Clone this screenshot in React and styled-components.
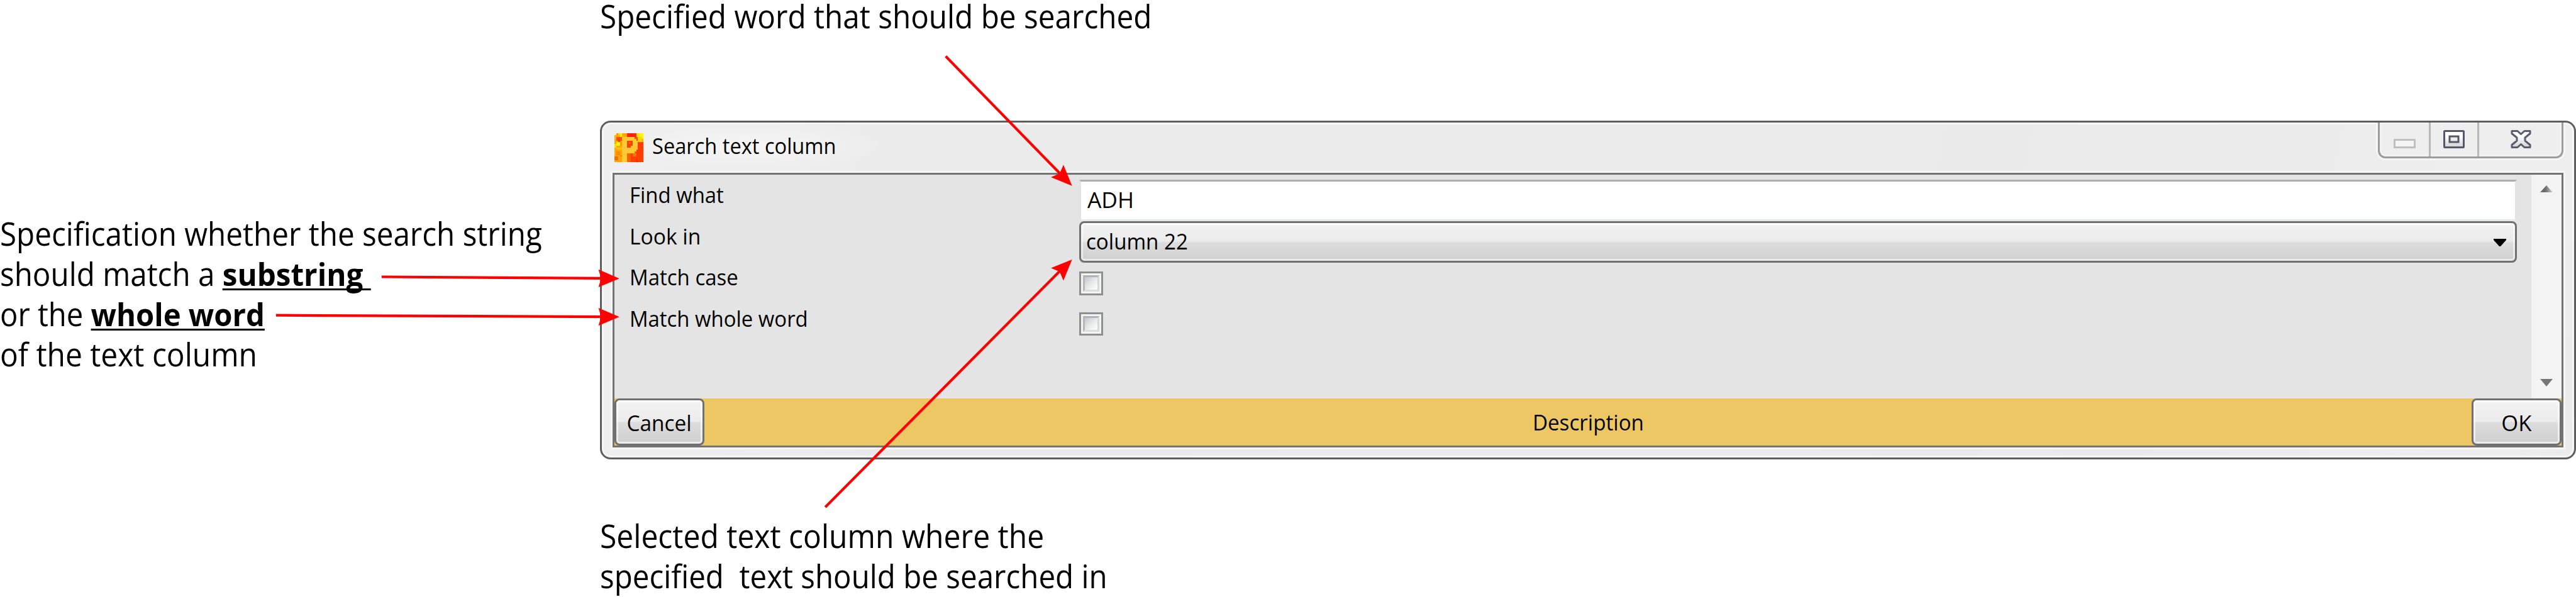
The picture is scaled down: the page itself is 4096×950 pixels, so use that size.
import React from 'react';
import styled, { createGlobalStyle } from 'styled-components';

const Global = createGlobalStyle`
  html, body { margin: 0; background: #fff; overflow: hidden; }
  * { box-sizing: border-box; }
`;

const Page = styled.main`
  position: relative;
  display: grid;
  grid-template-columns: 954px 3142px;
  width: 4096px;
  height: 950px;
  overflow: hidden;
  background: #fff;
  font-family: "Open Sans", "Noto Sans", sans-serif;
  color: #000;
`;

const SideNotes = styled.aside`
  padding-top: 339.6px;
`;

const Stage = styled.section`
  display: flex;
  flex-direction: column;
`;

const TopNote = styled.div`
  height: 192px;
`;

const BottomNote = styled.div`
  padding-top: 89.6px;
`;

const NoteLine = styled.div`
  height: ${(p) => p.$line || 63.97}px;
  line-height: ${(p) => p.$line || 63.97}px;
  font-size: 50.3px;
  white-space: pre;
  transform: scaleX(${(p) => p.$fit});
  transform-origin: left center;
`;

const Strong = styled.strong`
  font-weight: 700;
  text-decoration: underline;
  text-decoration-thickness: 3px;
  text-underline-offset: 4px;
  text-decoration-skip-ink: none;
`;

const Window = styled.section`
  width: 3142px;
  height: 539px;
  padding: 0 17px;
  border: 3px solid #5e5e5e;
  border-radius: 17px;
  box-shadow: inset 0 0 0 3px #f6f6f6;
  background: linear-gradient(100deg, #efefef 0, #eeeeee 260px, #ebebeb 520px, #eaeaea 70%, #eeeeee 97%, #ebebeb 100%);
`;

const TitleBar = styled.header`
  display: flex;
  align-items: flex-start;
  justify-content: space-between;
  height: 80px;
`;

const TitleGroup = styled.div`
  display: flex;
  align-items: flex-start;
  padding: 17px 60px 0 3px;
  height: 74px;
  background: radial-gradient(closest-side, rgba(255, 255, 255, 0.45), rgba(255, 255, 255, 0));
`;

const AppIcon = styled.svg`
  width: 46px;
  height: 46px;
  margin-right: 14px;
`;

const UiText = styled.span`
  display: inline-block;
  font-size: 35px;
  line-height: ${(p) => p.$line || 48}px;
  white-space: nowrap;
  transform: scaleX(${(p) => p.$fit});
  transform-origin: ${(p) => p.$origin || 'left'} center;
`;

const Controls = styled.div`
  display: flex;
  height: 57px;
  border: 3px solid #9c9c9c;
  border-top: 0;
  border-radius: 0 0 12px 12px;
  width: 295px;
  background: #eeeeee;
  box-shadow: 0 0 0 3px #f5f5f5, inset 0 0 0 3px #f2f2f2;
  clip-path: inset(0 -4px -4px -4px);
`;

const ControlButton = styled.div`
  width: ${(p) => p.$width}px;
  height: 54px;
  border-right: ${(p) => (p.$last ? 0 : 3)}px solid #b8b8b8;
  padding-top: 12px;
  padding-left: ${(p) => p.$pad}px;
`;

const Glyph = styled.svg`
  display: block;
`;

const Client = styled.div`
  width: 3102px;
  height: 437px;
  border: 3px solid #737373;
  box-shadow: 0 0 0 3px #f6f6f6;
  background: #e4e4e4;
`;

const Body = styled.div`
  display: flex;
  height: 356px;
`;

const Form = styled.div`
  flex: 1;
  padding: 8px 23px 0 24px;
`;

const Row = styled.div`
  display: grid;
  grid-template-columns: 715.3px 1fr;
  align-items: start;
  height: 65.65px;
`;

const TextField = styled.div`
  height: 65.65px;
  padding-left: 10px;
  border: 3px solid;
  border-color: #abadb3 #e2e3ea #e3e9ef #e2e3ea;
  background: #fff;
`;

const Combo = styled.div`
  display: flex;
  justify-content: space-between;
  height: 66px;
  padding: 0 14.5px 0 7.5px;
  border: 3px solid #707070;
  border-radius: 8px;
  background: linear-gradient(#f2f2f2 0, #ebebeb 48%, #dddddd 52%, #cfcfcf 100%);
  box-shadow: inset 0 0 0 3px rgba(255, 255, 255, 0.55), inset 0 3px 0 #fff;
`;

const ComboArrow = styled.svg`
  width: 20px;
  height: 12px;
  margin-top: 25px;
`;

const CheckBox = styled.div`
  width: 37.5px;
  height: 37.5px;
  margin-top: ${(p) => p.$top}px;
  padding: 3px;
  border: 3px solid #8e8f8f;
  background: #f4f4f4;
`;

const CheckWell = styled.div`
  height: 100%;
  border: 3px solid;
  border-color: #aeb3b9 #d5d7d9 #dcdddd #b5b9be;
  background: linear-gradient(135deg, #c3c8d0 0, #e6e8ea 50%, #f7f7f7 80%);
`;

const ScrollBar = styled.div`
  display: flex;
  flex-direction: column;
  justify-content: space-between;
  align-items: center;
  width: 48px;
  padding: 17px 0 19px;
  background: #f3f3f3;
`;

const Footer = styled.footer`
  display: flex;
  align-items: center;
  justify-content: space-between;
  height: 75px;
  background: #edc763;
`;

const Button = styled.div`
  width: 142.5px;
  height: 75px;
  text-align: center;
  border: 3px solid #707070;
  border-radius: 8px;
  background: linear-gradient(#f3f3f3 0, #ebebeb 49%, #dddddd 51%, #cecece 100%);
  box-shadow: inset 0 0 0 3px rgba(255, 255, 255, 0.6), inset 0 3px 0 #fff;
`;

const Arrows = styled.svg`
  position: absolute;
  left: 0;
  top: 0;
  width: 4096px;
  height: 949.5px;
  pointer-events: none;
`;

const ARROWS = [
  { line: [1645.4, 98, 1846, 304], head: '1865.3,323.7 1850.3,287 1843.7,302 1828.5,308.7' },
  { line: [1435.9, 883, 1846, 470], head: '1865.3,452 1828.5,466.8 1843.5,473 1850.3,488.7' },
  { line: [664, 482, 1050, 484.7], head: '1077.7,484.9 1041.2,469.3 1046,484.7 1041.2,500' },
  { line: [480.2, 549, 1050, 551.6], head: '1077.7,551.8 1041.2,536.3 1046,551.7 1041.2,567' },
];

const SPECKS = [
  [0, 0, 1, 1, '#fff59a'], [1, 0, 1, 1, '#ff9a00'], [2, 0, 2, 1, '#ffd800'], [3, 0, 1, 2, '#fff200'],
  [7, 0, 5, 2, '#ff2400'], [12, 0, 4, 2, '#ffdc00'], [14, 0, 2, 3, '#fff600'], [13, 2, 2, 3, '#ffd000'],
  [15, 3, 1, 2, '#ffb400'], [0, 1, 1, 2, '#ffb000'], [1, 2, 3, 2, '#ff5000'], [2, 3, 1, 2, '#ff3c00'],
  [1, 5, 2, 2, '#fff000'], [0, 6, 1, 2, '#ffdc00'], [3, 5, 1, 2, '#ff9000'], [1, 8, 3, 1, '#ffc400'],
  [1, 10, 2, 2, '#ff8800'], [3, 12, 1, 1, '#ff7000'], [0, 13, 2, 2, '#ff6a00'], [2, 15, 2, 1, '#ffa000'],
  [9, 10, 3, 1, '#ff5a00'], [10, 11, 2, 2, '#ff7400'], [8, 12, 1, 2, '#ff5800'], [12, 15, 1, 1, '#ff2000'],
];

function Icon() {
  return (
    <AppIcon viewBox="0 0 16 16" shapeRendering="crispEdges">
      <rect width="16" height="16" fill="#ff3e00" />
      <rect width="8" height="16" fill="#ffa800" />
      <rect x="7" y="10" width="2" height="6" fill="#ff6000" />
      <rect x="8" y="1" width="5" height="2" fill="#ff5000" />
      {SPECKS.map(([x, y, w, h, c], i) => (
        <rect key={i} x={x} y={y} width={w} height={h} fill={c} />
      ))}
      <path
        fill="#ffc933" fillRule="evenodd"
        d="M4 2h7v1h1v1h1v5h-1v1h-1v1H7v5H4zM7 4v4h2V7h1V4z"
      />
      <path fill="#ff3e00" d="M7 4h3v3H9v1H7z" />
      <path fill="#ff7000" d="M8 5h1v1H8z" />
    </AppIcon>
  );
}

export default function App() {
  return (
    <Page>
      <Global />
      <SideNotes>
        <NoteLine $fit={0.9464}>Specification whether the search string</NoteLine>
        <NoteLine $fit={0.946}>should match a <Strong>substring </Strong></NoteLine>
        <NoteLine $fit={0.939}>or the <Strong>whole word</Strong></NoteLine>
        <NoteLine $fit={0.953}>of the text column</NoteLine>
      </SideNotes>
      <Stage>
        <TopNote>
          <NoteLine $line={51} $fit={0.948}>Specified word that should be searched</NoteLine>
        </TopNote>
        <Window>
          <TitleBar>
            <TitleGroup>
              <Icon />
              <UiText $fit={0.932} $line={40}>Search text column</UiText>
            </TitleGroup>
            <Controls>
              <ControlButton $width={81} $pad={22}>
                <Glyph width="35" height="29" viewBox="0 0 35 29">
                  <rect x="1.5" y="15.5" width="32" height="12" fill="#f5f5f5" stroke="#bfbfbf" strokeWidth="3" />
                </Glyph>
              </ControlButton>
              <ControlButton $width={77} $pad={20}>
                <Glyph width="34" height="29" viewBox="0 0 34 29">
                  <defs>
                    <linearGradient id="metal" x1="0" y1="0" x2="0" y2="1">
                      <stop offset="0.3" stopColor="#fff" />
                      <stop offset="1" stopColor="#d2d2d2" />
                    </linearGradient>
                  </defs>
                  <rect x="1.5" y="1.5" width="31" height="26" rx="1" fill="url(#metal)" stroke="#55576a" strokeWidth="3" />
                  <rect x="10" y="10" width="14" height="9" fill="#ececec" stroke="#55576a" strokeWidth="3" />
                </Glyph>
              </ControlButton>
              <ControlButton $width={131} $pad={50} $last>
                <Glyph width="33" height="29" viewBox="0 0 33 29">
                  <path
                    d="M2 1.5h9l5.5 5 5.5-5h9v4L23 12v5l8 6.5v4h-9l-5.500-5-5.500 5H2v-4L10 17v-5L2 5.500z"
                    fill="url(#metal)" stroke="#5a5c6e" strokeWidth="3" strokeLinejoin="round"
                  />
                </Glyph>
              </ControlButton>
            </Controls>
          </TitleBar>
          <Client>
            <Body>
              <Form>
                <Row>
                  <UiText $fit={0.94}>Find what</UiText>
                  <TextField><UiText $fit={1.01} $line={58}>ADH</UiText></TextField>
                </Row>
                <Row>
                  <UiText $fit={0.96}>Look in</UiText>
                  <Combo>
                    <UiText $fit={0.946} $line={58}>column 22</UiText>
                    <ComboArrow viewBox="0 0 20 12"><path d="M0 0h20v2L11 12H9L0 2z" /></ComboArrow>
                  </Combo>
                </Row>
                <Row>
                  <UiText $fit={0.943}>Match case</UiText>
                  <CheckBox $top={15}><CheckWell /></CheckBox>
                </Row>
                <Row>
                  <UiText $fit={0.94}>Match whole word</UiText>
                  <CheckBox $top={14}><CheckWell /></CheckBox>
                </Row>
              </Form>
              <ScrollBar>
                <Glyph width="20" height="11" viewBox="0 0 20 11">
                  <defs>
                    <linearGradient id="thumb"><stop offset="0.4" stopColor="#6a6a6a" /><stop offset="1" stopColor="#d0d0d0" /></linearGradient>
                  </defs>
                  <path d="M0 11L10 0l10 11z" fill="url(#thumb)" />
                </Glyph>
                <Glyph width="20" height="12" viewBox="0 0 20 12"><path d="M0 0h20L10 12z" fill="#777" /></Glyph>
              </ScrollBar>
            </Body>
            <Footer>
              <Button><UiText $fit={0.955} $line={71} $origin="center">Cancel</UiText></Button>
              <UiText $fit={0.947} $line={77} $origin="center">Description</UiText>
              <Button><UiText $fit={0.987} $line={71} $origin="center">OK</UiText></Button>
            </Footer>
          </Client>
        </Window>
        <BottomNote>
          <NoteLine $fit={0.9546}>Selected text column where the</NoteLine>
          <NoteLine $fit={0.9447}>specified  text should be searched in</NoteLine>
        </BottomNote>
      </Stage>
      <Arrows viewBox="0 0 4482 1039" preserveAspectRatio="none">
        {ARROWS.map((a) => (
          <g key={a.head} fill="#f00" stroke="none">
            <line x1={a.line[0]} y1={a.line[1]} x2={a.line[2]} y2={a.line[3]} stroke="#f00" strokeWidth="4.6" />
            <polygon points={a.head} />
          </g>
        ))}
      </Arrows>
    </Page>
  );
}
